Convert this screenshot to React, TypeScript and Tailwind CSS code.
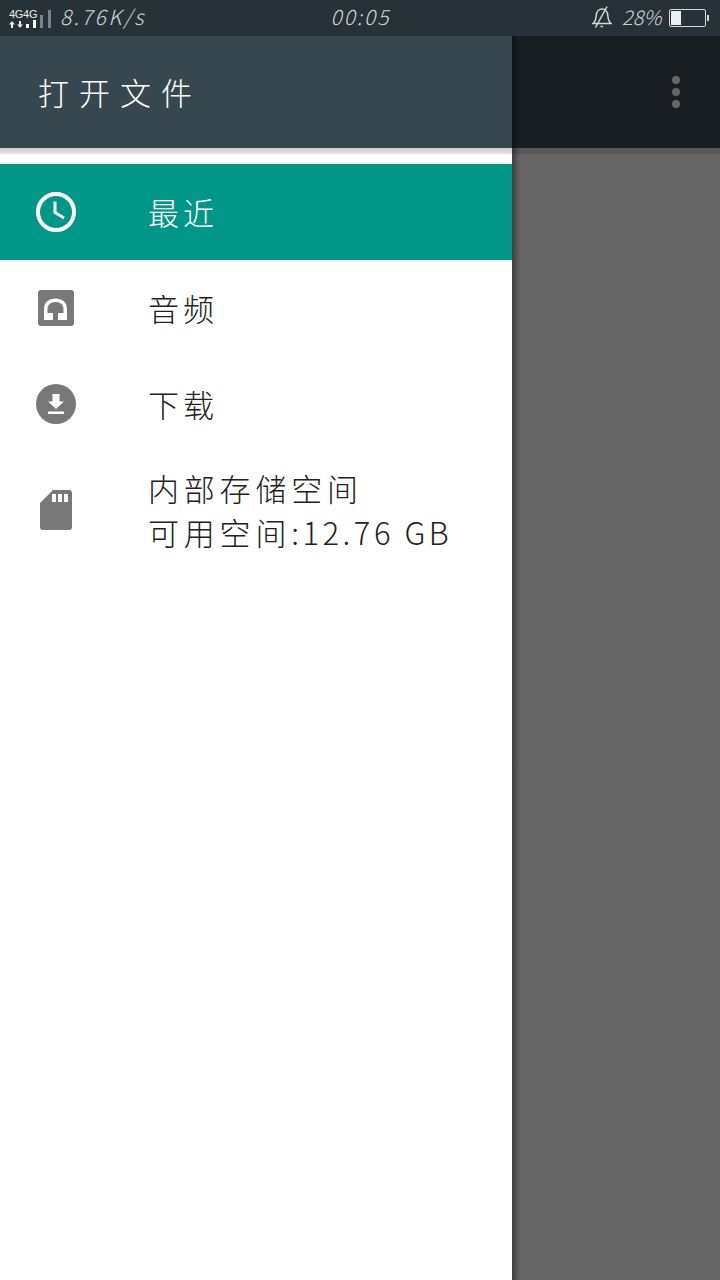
const cjk = "font-['Noto_Sans_CJK_SC',sans-serif] font-light";

function Clock() {
  return (
    <svg width="40" height="40" viewBox="0 0 40 40" fill="none" stroke="#fff">
      <circle cx="20" cy="20" r="18" strokeWidth="4" />
      <path d="M19 9.5V20.5L28 26" strokeWidth="3" />
    </svg>
  );
}

function Headphones() {
  return (
    <svg width="36" height="36" viewBox="0 0 36 36">
      <rect width="36" height="36" rx="3" fill="#787878" />
      <path d="M6 30V19C6 12.5 11 8.5 17.5 8.5S29 12.5 29 19V30H20V23H25.5V19C25.5 15 22.5 12 17.5 12S9.5 15 9.5 19V23H15V30Z" fill="#fff" />
    </svg>
  );
}

function Download() {
  return (
    <svg width="40" height="40" viewBox="0 0 40 40">
      <circle cx="20" cy="20" r="20" fill="#787878" />
      <path d="M16.5 10H23.5V17.5H28L20 25L12 17.5H16.5Z" fill="#fff" />
      <rect x="12" y="27.5" width="16" height="2.5" fill="#fff" />
    </svg>
  );
}

function SdCard() {
  return (
    <svg width="32" height="40" viewBox="0 0 32 40">
      <path d="M13 0H29C30.7 0 32 1.3 32 3V37C32 38.7 30.7 40 29 40H3C1.3 40 0 38.7 0 37V13Z" fill="#787878" />
      <rect x="12" y="4" width="4" height="8" fill="#fff" />
      <rect x="18" y="4" width="4" height="8" fill="#fff" />
      <rect x="24" y="4" width="4" height="8" fill="#fff" />
    </svg>
  );
}

function BellOff() {
  return (
    <svg width="20" height="22" viewBox="0 0 20 22" fill="none" stroke="#d5d9db" strokeWidth="1.5">
      <path d="M1 17.5C3.5 15.5 4 13 4.2 9.5C4.5 5.5 7 3 10 3S15.5 5.5 15.8 9.5C16 13 16.5 15.5 19 17.5Z" />
      <path d="M8.5 20.5H11" />
      <path d="M15 0.5L3.5 21.5" />
    </svg>
  );
}

function Arrows() {
  return (
    <svg width="14" height="7" viewBox="0 0 14 7" fill="#e8eaeb" className="shrink-0">
      <path d="M3 0L6 3.5H4V7H2V3.5H0Z" />
      <path d="M11 7L14 3.5H12V0H10V3.5H8Z" />
    </svg>
  );
}

function Row({ icon, active, children }: { icon: React.ReactNode; active?: boolean; children: React.ReactNode }) {
  return (
    <div className={`flex h-24 items-center ${active ? "bg-[#009688] text-white" : "text-[#222]"}`}>
      <div className="flex w-[112px] justify-center">{icon}</div>
      <div className="pl-9 text-[31px] leading-[44px] tracking-[4px]">{children}</div>
    </div>
  );
}

export default function App() {
  return (
    <div className={`flex h-[1280px] w-[720px] flex-col overflow-hidden bg-white ${cjk}`}>
      <div className="flex h-9 shrink-0 items-center bg-[#263238] text-[#d0d4d6]">
        <div className="ml-[9px] flex items-end pt-[1px]">
          <div className="w-[29px]">
            <div className="whitespace-nowrap font-['Liberation_Sans',sans-serif] text-[11px] font-normal leading-[10px] tracking-[-0.3px] text-[#e8eaeb]">4G4G</div>
            <div className="mt-[1px] flex h-[8px] items-end">
              <Arrows />
              <div className="ml-[3px] h-[4px] w-[3px] shrink-0 bg-white" />
              <div className="ml-[4px] h-[8px] w-[3px] shrink-0 bg-white" />
            </div>
          </div>
          <div className="ml-[2px] h-[13px] w-[3px] bg-[#78838a]" />
          <div className="ml-[5px] h-[18px] w-[3px] bg-[#78838a]" />
        </div>
        <div className="ml-[9px] w-[90px] pb-[3px] text-[21px] font-extralight italic tracking-[2.3px]">8.76K/s</div>
        <div className="ml-[180px] w-[61px] pb-[3px] text-center text-[21px] font-extralight italic tracking-[2px]">00:05</div>
        <div className="ml-[201px] pb-[2px]"><BellOff /></div>
        <div className="ml-[10px] w-[38px] pb-[3px] text-[20px] font-extralight italic">28%</div>
        <div className="ml-[9px] flex items-center">
          <div className="h-[18px] w-[37px] rounded-[2px] border border-[#d5d9db] p-[1px]">
            <div className="h-full w-[10px] bg-[#eceeef]" />
          </div>
          <div className="ml-[1px] h-[6px] w-[2px] bg-[#d5d9db]" />
        </div>
      </div>
      <div className="flex min-h-0 flex-1">
        <div className="flex w-[512px] shrink-0 flex-col bg-white">
          <div className="flex h-[112px] items-center bg-[#37474f] pl-[38px] pt-[1px] text-[31px] tracking-[10px] text-white">打开文件</div>
          <div className="h-[6px] bg-gradient-to-b from-[#cfcfcf] to-[#e4e4e4]" />
          <div className="h-[10px]" />
          <Row icon={<Clock />} active>最近</Row>
          <Row icon={<Headphones />}>音频</Row>
          <Row icon={<Download />}>下载</Row>
          <div className="flex h-[116px] items-center text-[#222]">
            <div className="flex w-[112px] justify-center"><SdCard /></div>
            <div className="pl-9 text-[31px] leading-[44px]">
              <div className="tracking-[4.8px]">内部存储空间</div>
              <div className="whitespace-nowrap tracking-[4.8px]">可用空间<span className="tracking-[3.5px]">:12.76 GB</span></div>
            </div>
          </div>
        </div>
        <div className="relative flex flex-1 flex-col bg-[#666666]">
          <div className="flex h-[112px] items-center justify-end bg-[#181e21] pr-10">
            <div className="flex flex-col gap-1">
              <div className="h-2 w-2 rounded-full bg-[#666]" />
              <div className="h-2 w-2 rounded-full bg-[#666]" />
              <div className="h-2 w-2 rounded-full bg-[#666]" />
            </div>
          </div>
          <div className="h-[6px] bg-[#585858]" />
          <div className="absolute inset-y-0 left-0 w-[8px] bg-gradient-to-r from-[#00000066] to-[#00000000]" />
        </div>
      </div>
    </div>
  );
}
